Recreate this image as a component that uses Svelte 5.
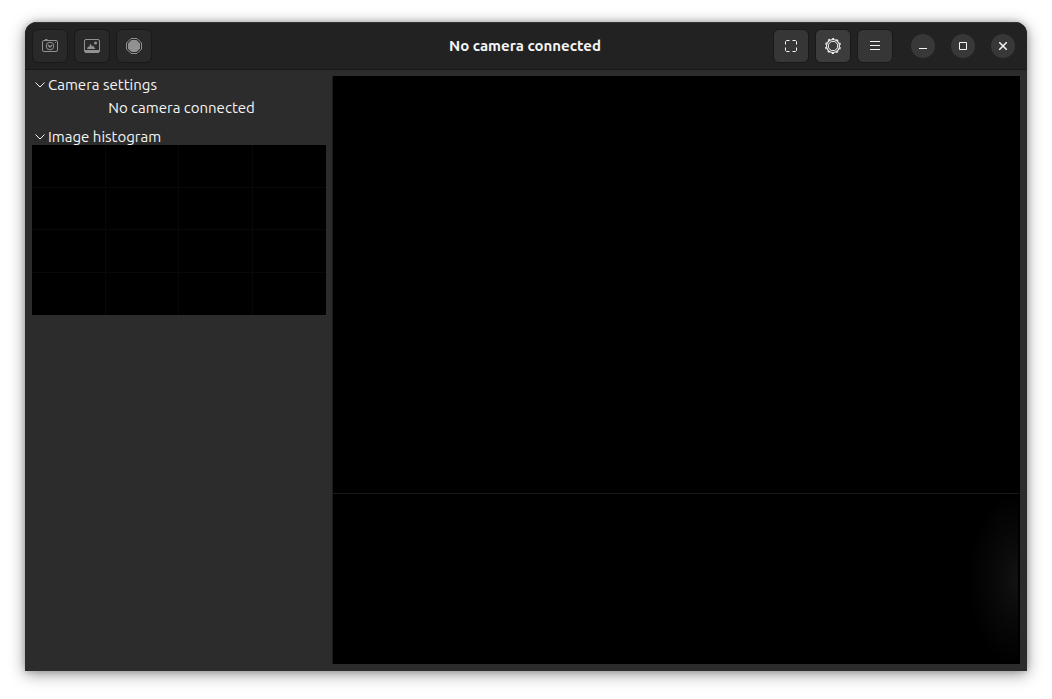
<script>
  let settingsOpen = true
  let histogramOpen = true
  const status = 'No camera connected'
</script>

<div class="window">
  <header>
    <div class="tools">
      <button class="tool" disabled aria-label="Take photo">
        <svg width="16" height="14" viewBox="0 0 16 14" fill="none" stroke="currentColor">
          <rect x="0.5" y="1.5" width="15" height="11" rx="1.5" />
          <path d="M3 .5h2.500M13 3.500h1" />
          <circle cx="8" cy="7" r="3.800" />
          <path d="M6 6l2 2 2-2" stroke-width="1.400" />
        </svg>
      </button>
      <button class="tool" disabled aria-label="Take raw photo">
        <svg width="16" height="14" viewBox="0 0 16 14">
          <rect x="0.5" y="0.5" width="15" height="13" rx="1.500" fill="none" stroke="currentColor" />
          <path d="M1 11h14v2.500H1zM3 10l1-2.500 1 .5L6.500 4.500 8 7.500l1-1L11.500 10z" fill="currentColor" />
          <circle cx="11.500" cy="4" r="1.600" fill="currentColor" />
        </svg>
      </button>
      <button class="tool" disabled aria-label="Record">
        <svg width="16" height="16" viewBox="0 0 16 16">
          <path d="M5 .5h6L15.500 5v6L11 15.500H5L.5 11V5z" fill="none" stroke="currentColor" />
          <path d="M5.500 2h5L14 5.500v5L10.500 14h-5L2 10.500v-5z" fill="currentColor" />
        </svg>
      </button>
    </div>

    <h1>{status}</h1>

    <div class="tools end">
      <button class="tool" aria-label="Fullscreen">
        <svg width="12" height="12" viewBox="0 0 12 12" fill="none" stroke="currentColor">
          <path d="M4.500 .5H1.500L.5 1.500v3M7.500 .5h3l1 1v3M11.500 7.500v3l-1 1h-3M4.500 11.500h-3l-1-1v-3" />
        </svg>
      </button>
      <button class="tool active" aria-label="Settings" aria-pressed="true">
        <svg width="16" height="16" viewBox="0 0 16 16" fill="none" stroke="currentColor">
          <circle cx="8" cy="8" r="7.400" stroke-width="1.200" stroke-dasharray="2.200 2.450" stroke-dashoffset="1.100" transform="rotate(-90 8 8)" />
          <circle cx="8" cy="8" r="6.500" stroke-width="1.100" />
          <circle cx="8" cy="8" r="4.700" stroke-width="1" />
        </svg>
      </button>
      <button class="tool" aria-label="Menu">
        <svg width="10" height="10" viewBox="0 0 10 10" stroke="currentColor">
          <path d="M0 .5h10M0 4.500h10M0 8.500h10" />
        </svg>
      </button>
      <div class="controls">
        <button aria-label="Minimize">
          <svg width="8" height="8" viewBox="0 0 8 8" stroke="currentColor">
            <path d="M0 6.500h8" />
          </svg>
        </button>
        <button aria-label="Maximize">
          <svg width="8" height="8" viewBox="0 0 8 8" fill="none" stroke="currentColor">
            <path d="M.5 .5h7v7h-7z" />
          </svg>
        </button>
        <button aria-label="Close">
          <svg width="8" height="8" viewBox="0 0 8 8" stroke="currentColor" stroke-width="1.500">
            <path d="M0 0l8 8M8 0L0 8" />
          </svg>
        </button>
      </div>
    </div>
  </header>

  <main>
    <aside>
      <section>
        <button class="expander" aria-expanded={settingsOpen} on:click={() => (settingsOpen = !settingsOpen)}>
          <svg width="10" height="6" viewBox="0 0 10 6" fill="none" stroke="currentColor">
            <path d="M.5 .5L5 5 9.500 .5" />
          </svg>
          Camera settings
        </button>
        {#if settingsOpen}
          <p>{status}</p>
        {/if}
      </section>

      <section>
        <button class="expander" aria-expanded={histogramOpen} on:click={() => (histogramOpen = !histogramOpen)}>
          <svg width="10" height="6" viewBox="0 0 10 6" fill="none" stroke="currentColor">
            <path d="M.5 .5L5 5 9.500 .5" />
          </svg>
          Image histogram
        </button>
        {#if histogramOpen}
          <div class="histogram">
            {#each Array(16) as _}
              <span></span>
            {/each}
          </div>
        {/if}
      </section>
    </aside>

    <div class="view">
      <div class="video"></div>
      <div class="lower"></div>
    </div>
  </main>
</div>

<style>
  :global(body) {
    background: #fff;
  }

  :global(#app) {
    display: flex;
    box-sizing: border-box;
    min-height: 100vh;
    padding: 22px 25px 28px;
  }

  .window {
    display: flex;
    flex: 1;
    flex-direction: column;
    overflow: hidden;
    border-radius: 12px 12px 0 0;
    background: #2c2c2c;
    color: #f5f5f5;
    font-family: Ubuntu, "Noto Sans", sans-serif;
    font-size: 15px;
    line-height: 17px;
    box-shadow: 0 3px 16px rgba(0, 0, 0, 0.42), 0 0 6px rgba(0, 0, 0, 0.2);
  }

  header {
    display: grid;
    grid-template-columns: 1fr auto 1fr;
    align-items: center;
    box-sizing: border-box;
    height: 48px;
    padding: 0 9px 0 7px;
    border-top: 1px solid #363636;
    border-bottom: 1px solid #181818;
    background: #222;
  }

  h1 {
    margin: 0;
    font-size: 15px;
    font-weight: 700;
    line-height: 18px;
  }

  button {
    display: flex;
    align-items: center;
    justify-content: center;
    padding: 0;
    border: 0;
    color: inherit;
    font: inherit;
  }

  .tools {
    display: flex;
    align-items: center;
    gap: 6px;
  }

  .end {
    justify-content: flex-end;
    margin-right: 3px;
  }

  .tool {
    width: 36px;
    height: 34px;
    border: 1px solid #191919;
    border-radius: 6px;
    background: #363636;
  }

  .tool:disabled {
    background: #292929;
    color: #919191;
  }

  .tool.active {
    background: #3c3c3c;
  }

  .controls {
    display: flex;
    gap: 16px;
    margin-left: 12px;
  }

  .controls button {
    width: 24px;
    height: 24px;
    border-radius: 50%;
    background: #383838;
  }

  main {
    display: flex;
    flex: 1;
    gap: 6px;
    padding: 6px 7px 7px;
  }

  aside {
    display: flex;
    flex: 0 0 294px;
    flex-direction: column;
    gap: 12px;
  }

  .expander {
    gap: 3px;
    padding: 0 3px;
    background: none;
  }

  p {
    margin: 6px 0 0 5px;
    text-align: center;
  }

  .histogram {
    display: grid;
    grid-template-columns: repeat(4, 1fr);
    grid-template-rows: repeat(4, 1fr);
    height: 170px;
    background: #000;
  }

  .histogram span {
    border-right: 1px solid #080808;
    border-bottom: 1px solid #080808;
  }

  .histogram span:nth-child(4n) {
    border-right: 0;
  }

  .histogram span:nth-child(n + 13) {
    border-bottom: 0;
  }

  .view {
    display: flex;
    flex: 1;
    flex-direction: column;
    border-left: 1px solid #1c1c1c;
    background: #000;
  }

  .video {
    flex: 417;
  }

  .lower {
    flex: 170;
    border-top: 1px solid #1a1a1a;
    border-right: 2px solid #000;
    background: radial-gradient(50px 88px at 100% 50%, #121212, #080808 50%, #000) padding-box;
  }
</style>
